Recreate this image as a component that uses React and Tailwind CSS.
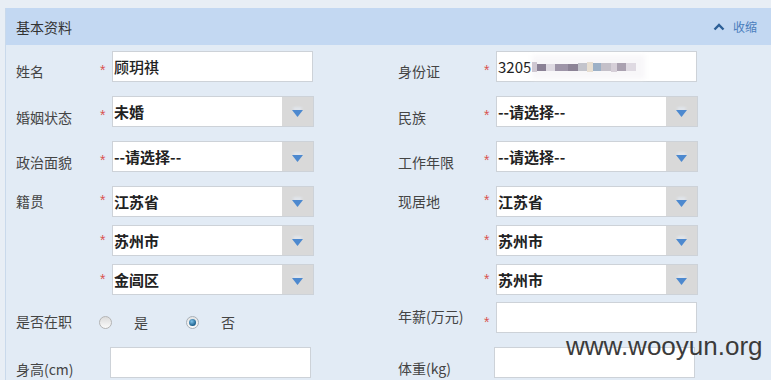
import React from "react";

const CJK = { fontFamily: '"Noto Sans CJK SC", "Noto Sans", sans-serif' };

function Star({ pt = "pt-[12px]", w = "w-[13px]" }) {
  return (
    <div className={`${w} shrink-0 pl-px ${pt}`}>
      <span
        className="block text-[14px] leading-[14px] text-[#d9534f]"
        style={{ fontFamily: '"Liberation Sans", Arial, sans-serif' }}
      >
        *
      </span>
    </div>
  );
}

function NoStar() {
  return <div className="w-[11px] shrink-0" />;
}

function Label({ text, w = "w-[83px]", pt = "pt-[10px]" }) {
  return (
    <div className={`${w} shrink-0 ${pt} text-[14px] leading-5 text-[#444]`}>{text}</div>
  );
}

function Input({ value, children, weight = "font-medium" }) {
  return (
    <div className={`flex h-[31px] w-[201px] shrink-0 items-center border border-[#cdd2d8] bg-white pl-px text-[15px] ${weight} leading-none text-[#222]`}>
      {value}
      {children}
    </div>
  );
}

function Select({ value }) {
  return (
    <div className="flex h-[31px] w-[202px] shrink-0 border border-[#cdd2d8] bg-white">
      <div className="flex flex-1 items-center pl-px text-[15px] font-semibold leading-none text-[#222]">
        {value}
      </div>
      <div className="relative flex w-[31px] items-center justify-center bg-[#d9d9d9]">
        <div className="absolute left-[11px] top-[10px] h-[4px] w-[9px] rounded-full bg-[#e6eef8] opacity-60 blur-[1px]" />
        <svg width="11" height="7" viewBox="0 0 11 7" className="relative mt-[3px]">
          <path d="M0 0H11L5.5 7Z" fill="#4d89cf" />
        </svg>
      </div>
    </div>
  );
}

function Col({ children, w = "w-[382px]" }) {
  return <div className={`flex ${w} shrink-0 items-start`}>{children}</div>;
}

function RadioOff() {
  return (
    <div className="h-[13px] w-[13px] rounded-full border border-[#b4b4b4] bg-gradient-to-b from-[#dcdcdc] to-[#fafafa]" />
  );
}

function RadioOn() {
  return (
    <div className="flex h-[13px] w-[13px] items-center justify-center rounded-full border border-[#a8b0b8] bg-gradient-to-b from-[#e4e4e4] to-[#fafafa]">
      <div className="h-[7px] w-[7px] rounded-full bg-[radial-gradient(circle_at_40%_35%,#7fc2ea,#1a5f8c_70%)]" />
    </div>
  );
}

function Mosaic() {
  return (
    <div className="relative ml-[1px] h-[24px] w-[113px]">
      <div className="absolute inset-0 bg-[#f8f7f9] blur-[2px]" />
      <div className="absolute left-0 top-[8px] flex h-[9px] items-center blur-[0.5px]">
        <div className="h-[10px] w-[5px] bg-[#cfc8d2]" />
        <div className="h-[7px] w-[9px] bg-[#8a8195]" />
        <div className="h-[7px] w-[9px] bg-[#dedae2]" />
        <div className="h-[7px] w-[13px] bg-[#9e95a8]" />
        <div className="h-[7px] w-[10px] bg-[#8c8396]" />
        <div className="h-[8px] w-[9px] bg-[#c3c4cc]" />
        <div className="h-[10px] w-[6px] bg-[#e8dfd2]" />
        <div className="h-[8px] w-[8px] bg-[#9cb0c6]" />
        <div className="h-[8px] w-[10px] bg-[#c4c0c9]" />
        <div className="h-[9px] w-[6px] bg-[#d6cfd8]" />
        <div className="h-[8px] w-[9px] bg-[#aaa1b0]" />
        <div className="h-[8px] w-[10px] bg-[#dfdae2]" />
      </div>
    </div>
  );
}

export default function App() {
  return (
    <div className="relative h-[380px] w-[771px] overflow-hidden bg-[#e8eef5]" style={CJK}>
      <div className="mt-[8px] ml-[5px] h-[372px] border-l border-[#c9d9eb] bg-[#e2ebf5]">
        {/* header */}
        <div className="flex h-[37px] items-center justify-between bg-[#c3d8f2] pl-[10px] pr-[14px]">
          <span className="text-[14px] leading-none text-[#333]">基本资料</span>
          <div className="flex items-center gap-[8px] text-[12px] leading-none text-[#4a7dbd]">
            <svg width="12" height="8" viewBox="0 0 12 8">
              <path d="M1.5 6.5L6 2L10.5 6.5" fill="none" stroke="#2d5f96" strokeWidth="2.4" />
            </svg>
            <span>收缩</span>
          </div>
        </div>

        {/* body */}
        <div className="pl-[10px] pt-[6px]">
          {/* row 1 */}
          <div className="flex">
            <Col>
              <Label text="姓名" />
              <Star />
              <Input value="顾玥祺" />
            </Col>
            <Col>
              <Label text="身份证" w="w-[85px]" />
              <Star />
              <Input value="3205" weight="font-normal">
                <Mosaic />
              </Input>
            </Col>
          </div>

          {/* row 2 */}
          <div className="mt-[14px] flex">
            <Col>
              <Label text="婚姻状态" pt="pt-[10.5px]" />
              <Star pt="pt-[12px]" />
              <Select value="未婚" />
            </Col>
            <Col>
              <Label text="民族" w="w-[85px]" pt="pt-[10.5px]" />
              <Star pt="pt-[12px]" />
              <Select value="--请选择--" />
            </Col>
          </div>

          {/* row 3 */}
          <div className="mt-[14px] flex">
            <Col>
              <Label text="政治面貌" pt="pt-[10.5px]" />
              <Star pt="pt-[12px]" />
              <Select value="--请选择--" />
            </Col>
            <Col>
              <Label text="工作年限" w="w-[85px]" pt="pt-[10.5px]" />
              <Star pt="pt-[12px]" />
              <Select value="--请选择--" />
            </Col>
          </div>

          {/* row 4 : address */}
          <div className="mt-[14px] flex">
            <Col>
              <Label text="籍贯" pt="pt-[5px]" />
              <div className="flex flex-col gap-[8px]">
                <div className="flex">
                  <Star pt="pt-[7px]" />
                  <Select value="江苏省" />
                </div>
                <div className="flex">
                  <Star pt="pt-[8px]" />
                  <Select value="苏州市" />
                </div>
                <div className="flex">
                  <Star pt="pt-[8px]" />
                  <Select value="金阊区" />
                </div>
              </div>
            </Col>
            <Col>
              <Label text="现居地" w="w-[85px]" pt="pt-[5px]" />
              <div className="flex flex-col gap-[8px]">
                <div className="flex">
                  <Star pt="pt-[7px]" />
                  <Select value="江苏省" />
                </div>
                <div className="flex">
                  <Star pt="pt-[8px]" />
                  <Select value="苏州市" />
                </div>
                <div className="flex">
                  <Star pt="pt-[8px]" />
                  <Select value="苏州市" />
                </div>
              </div>
            </Col>
          </div>

          {/* row 5 */}
          <div className="mt-[7px] flex">
            <Col>
              <Label text="是否在职" pt="pt-[9px]" />
              <div className="flex items-center pt-[13px] text-[14px] leading-none text-[#444]">
                <RadioOff />
                <span className="ml-[22px]">是</span>
                <div className="ml-[38px]">
                  <RadioOn />
                </div>
                <span className="ml-[22px]">否</span>
              </div>
            </Col>
            <Col>
              <Label text="年薪(万元)" w="w-[85px]" pt="pt-[3.5px]" />
              <Star pt="pt-[13px]" />
              <Input value="" />
            </Col>
          </div>

          {/* row 6 */}
          <div className="mt-[14px] flex">
            <Col>
              <Label text="身高(cm)" pt="pt-[11.5px]" />
              <NoStar />
              <Input value="" />
            </Col>
            <Col>
              <Label text="体重(kg)" w="w-[85px]" pt="pt-[10.5px]" />
              <NoStar />
              <Input value="" />
            </Col>
          </div>
        </div>
      </div>

      {/* watermark */}
      <div
        className="absolute left-[566px] top-[333px] text-[26px] leading-none text-[#3b3b3b]"
        style={{ fontFamily: '"Liberation Sans", Arial, sans-serif' }}
      >
        www.wooyun.org
      </div>
    </div>
  );
}
